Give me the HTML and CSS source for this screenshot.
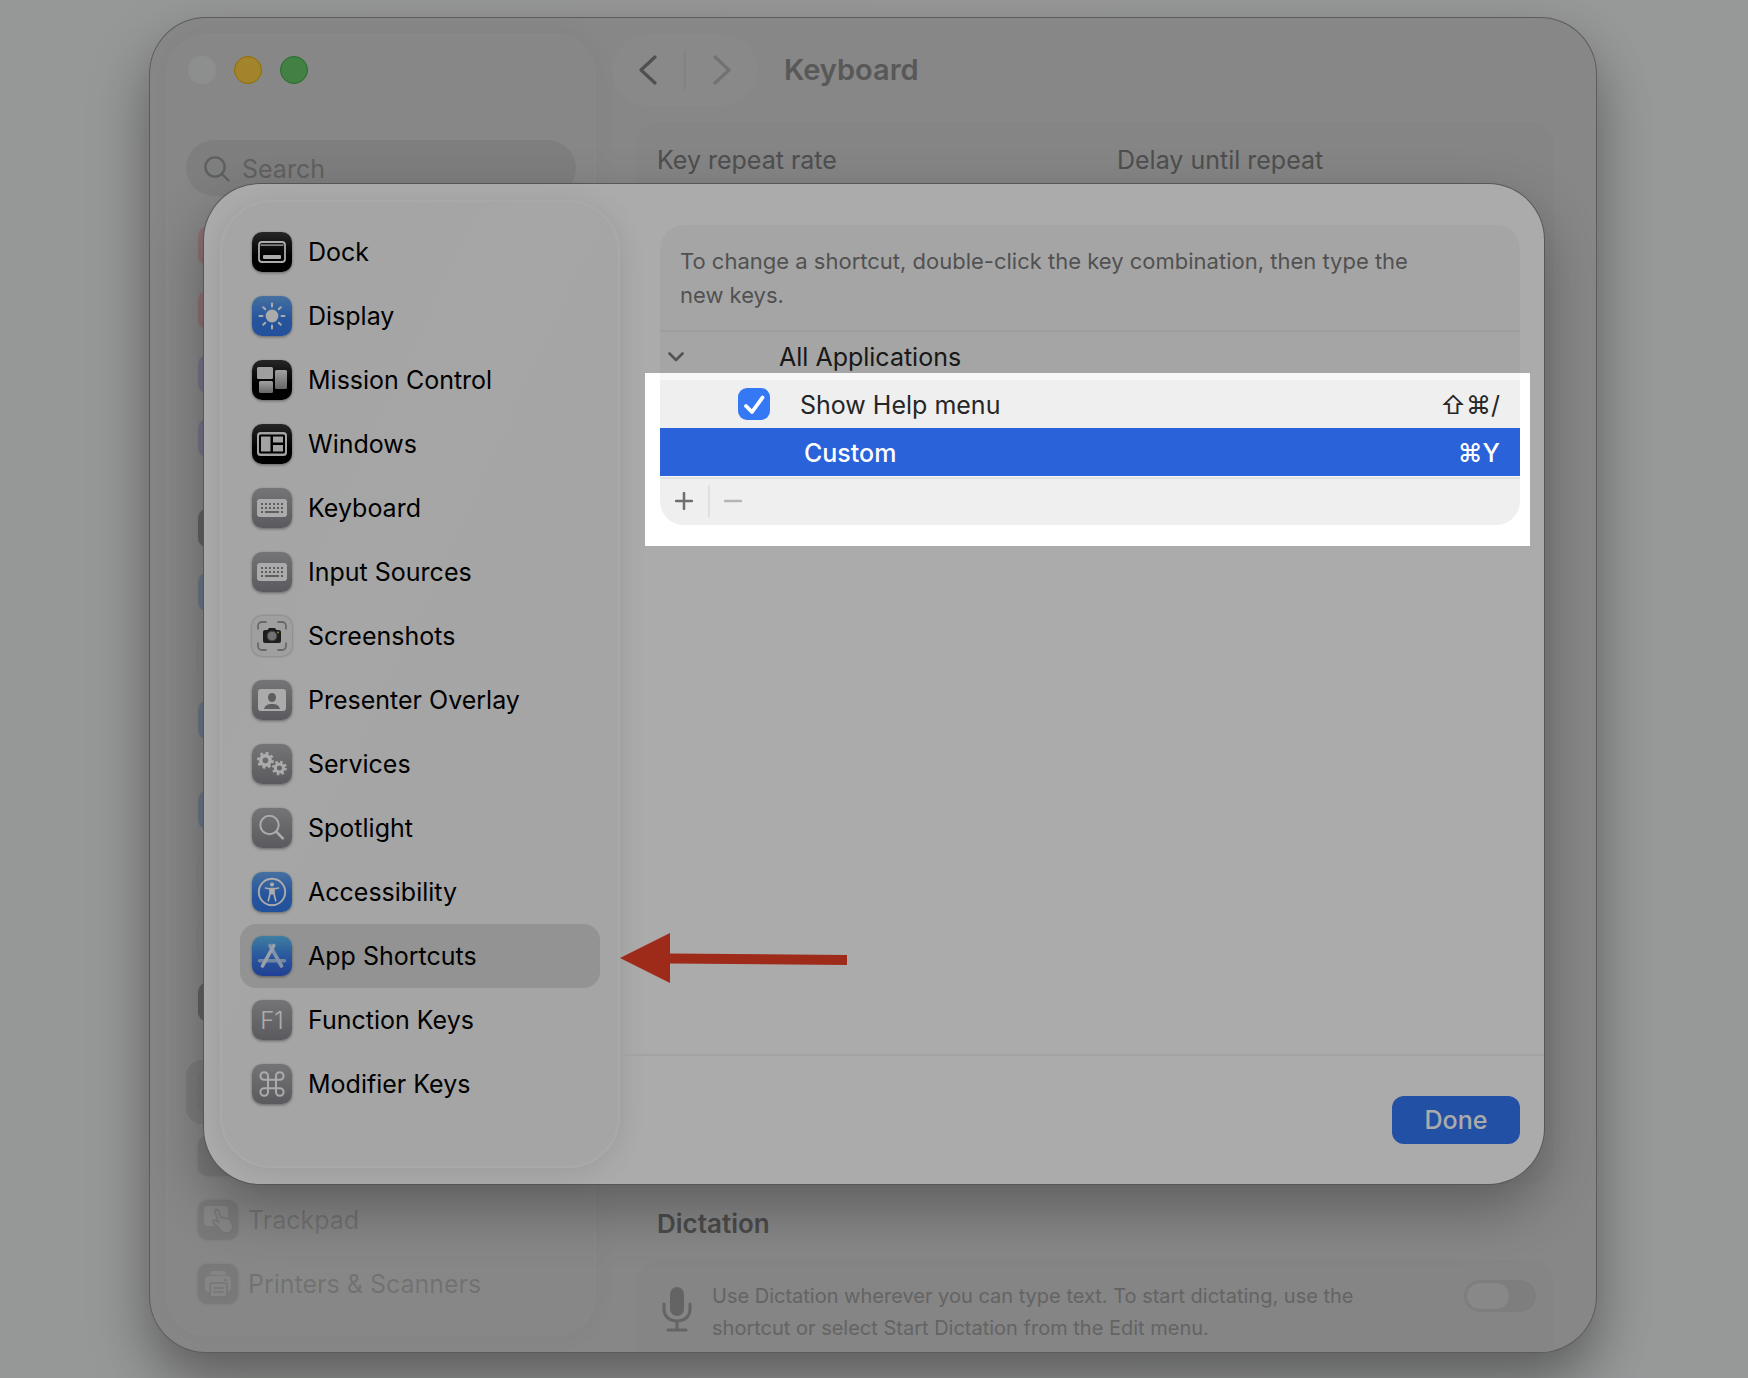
FILE: index.html
```html
<!DOCTYPE html>
<html lang="en">
<head>
<meta charset="utf-8">
<title>Keyboard</title>
<link rel="stylesheet" href="styles.css">
</head>
<body>
<div class="window">
  <aside class="sidebar">
    <div class="lights">
      <span class="light light-off"></span>
      <span class="light light-yellow"></span>
      <span class="light light-green"></span>
    </div>
    <label class="search">
      <svg width="26" height="26" viewBox="0 0 26 26" fill="none" stroke="currentColor" stroke-width="2.4" stroke-linecap="round"><circle cx="11" cy="11" r="9.6"/><path d="M18 18l6.5 6.5"/></svg>
      <input type="text" placeholder="Search">
    </label>
    <ul class="back-list">
      <li><span class="tile tile-pink"></span></li>
      <li><span class="tile tile-pink"></span></li>
      <li><span class="tile tile-purple"></span></li>
      <li><span class="tile tile-purple"></span></li>
    </ul>
    <ul class="back-list">
      <li><span class="tile tile-dark"></span></li>
      <li><span class="tile tile-blue"></span></li>
      <li><span class="tile tile-pale"></span></li>
      <li><span class="tile tile-blue"></span></li>
    </ul>
    <ul class="back-list">
      <li><span class="tile tile-blue"></span></li>
      <li><span class="tile tile-pale"></span></li>
      <li><span class="tile tile-pale"></span></li>
      <li><span class="tile tile-dark"></span></li>
    </ul>
    <ul class="back-list">
      <li class="current"><span class="tile tile-mid"></span></li>
      <li><span class="tile tile-mid"></span></li>
      <li>
        <span class="tile tile-mid"><svg width="40" height="40" viewBox="0 0 40 40"><rect x="6" y="6" width="24" height="20" rx="3" fill="#c8c8c8"/><path d="M17 12c-1-3 2.500-3.500 3.500-1l2.500 7c1-1 2.500-.8 3 0 1-.6 2.500-.4 3 .5 1-.4 2.600.2 3 1.500l2.500 5c1 4-1 8-6 8-4 0-6-2-8-5l-5-5c-1.500-2 .5-3.500 2.500-2.500l2.500 1.500z" fill="#c8c8c8" stroke="#b0b0b0" stroke-width="1.500"/></svg></span>
        <span>Trackpad</span>
      </li>
      <li>
        <span class="tile tile-mid"><svg width="40" height="40" viewBox="0 0 40 40"><rect x="12" y="7" width="16" height="4" rx="2" fill="#c6c6c6"/><rect x="7" y="12" width="26" height="16" rx="4" fill="#c6c6c6"/><circle cx="27.500" cy="16" r="1.300" fill="#b0b0b0"/><rect x="12" y="19" width="17" height="14" rx="2" fill="#c6c6c6" stroke="#b0b0b0" stroke-width="1.500"/><path d="M16 24h9M16 28h9" stroke="#b0b0b0" stroke-width="1.600" stroke-linecap="round"/></svg></span>
        <span>Printers &amp; Scanners</span>
      </li>
    </ul>
  </aside>

  <main class="main">
    <header class="toolbar">
      <div class="nav">
        <button type="button" aria-label="Back"><svg width="18" height="30" viewBox="0 0 18 30"><path d="M16 2L2 15l14 13"/></svg></button>
        <button type="button" aria-label="Forward" class="nav-off"><svg width="18" height="30" viewBox="0 0 18 30"><path d="M2 2l14 13L2 28"/></svg></button>
      </div>
      <h1>Keyboard</h1>
    </header>
    <section class="card repeat">
      <span>Key repeat rate</span>
      <span>Delay until repeat</span>
    </section>
    <h2>Dictation</h2>
    <section class="card dictation">
      <svg class="mic" width="30" height="46" viewBox="0 0 30 46" fill="none" stroke="currentColor" stroke-width="3" stroke-linecap="round"><rect x="8" y="1" width="14" height="29" rx="7" fill="currentColor" stroke="none"/><path d="M2 18v5c0 7 5 12 13 12s13-5 13-12v-5M15 35v9M6 44h18"/></svg>
      <p>Use Dictation wherever you can type text. To start dictating, use the<br>shortcut or select Start Dictation from the Edit menu.</p>
      <input type="checkbox" class="toggle" aria-label="Dictation">
    </section>
  </main>

  <div class="sheet" role="dialog" aria-label="Keyboard shortcuts">
    <nav class="sheet-side">
      <ul>
        <li><a href="#">
          <svg class="icon black" viewBox="0 0 40 40" fill="none"><rect x="7" y="10" width="26" height="20" rx="3" stroke="#fff" stroke-width="1.800"/><path d="M8.500 13.200h23" stroke="#fff" stroke-width="1.300"/><rect x="11" y="23" width="18" height="4" rx="1" fill="#fff"/></svg>Dock</a></li>
        <li><a href="#">
          <svg class="icon blue" viewBox="0 0 40 40"><circle cx="20" cy="20" r="6.400" fill="#fff"/><path d="M20 7.500v3M20 29.500v3M7.500 20h3M29.500 20h3M11.200 11.200l2.100 2.100M26.700 26.700l2.100 2.100M11.200 28.800l2.100-2.100M26.700 13.300l2.100-2.100" stroke="#fff" stroke-width="2" stroke-linecap="round"/></svg>Display</a></li>
        <li><a href="#">
          <svg class="icon black" viewBox="0 0 40 40"><defs><linearGradient id="mc" x1="0" y1="0" x2="0" y2="1"><stop offset="0" stop-color="#f0f0f0"/><stop offset="1" stop-color="#999"/></linearGradient></defs><rect x="5" y="7" width="16" height="12" rx="1.500" fill="#eee"/><rect x="23" y="10" width="12" height="19" rx="1.500" fill="url(#mc)"/><rect x="7" y="21" width="14" height="12" rx="1.500" fill="url(#mc)"/></svg>Mission Control</a></li>
        <li><a href="#">
          <svg class="icon black" viewBox="0 0 40 40"><rect x="5" y="8" width="30" height="24" rx="3.500" fill="#f4f4f4"/><rect x="7" y="10.500" width="26" height="19" rx="1.500" fill="#000"/><path d="M9 12.500h9.500v15H9zM21 12.500h10v6H21zM21 21h10v6.500H21z" fill="#f4f4f4"/></svg>Windows</a></li>
        <li><a href="#">
          <svg class="icon gray" viewBox="0 0 40 40"><rect x="5" y="11" width="30" height="18" rx="3" fill="#fff"/><path d="M9 16h22M9 20h22" stroke="#8c8c91" stroke-width="2" stroke-dasharray="2 2"/><path d="M9 24h2M13 24h14M29 24h2" stroke="#8c8c91" stroke-width="2"/></svg>Keyboard</a></li>
        <li><a href="#">
          <svg class="icon gray" viewBox="0 0 40 40"><rect x="5" y="11" width="30" height="18" rx="3" fill="#fff"/><path d="M9 16h22M9 20h22" stroke="#8c8c91" stroke-width="2" stroke-dasharray="2 2"/><path d="M9 24h2M13 24h14M29 24h2" stroke="#8c8c91" stroke-width="2"/></svg>Input Sources</a></li>
        <li><a href="#">
          <svg class="icon white" viewBox="0 0 40 40" fill="none"><path d="M6 13.500V10a4 4 0 0 1 4-4h4.500M25.500 6H30a4 4 0 0 1 4 4v3.500M34 26.500V30a4 4 0 0 1-4 4h-4.500M14.500 34H10a4 4 0 0 1-4-4v-3.500" stroke="#9c9c9c" stroke-width="1.800"/><path d="M13 14h2.500l1.500-2h6l1.500 2H27a2 2 0 0 1 2 2v9a2 2 0 0 1-2 2H13a2 2 0 0 1-2-2v-9a2 2 0 0 1 2-2z" fill="#2e2e2e"/><circle cx="20" cy="20" r="4.800" fill="#aaa" stroke="#666"/><circle cx="26" cy="16.500" r="1" fill="#e8c23a"/></svg>Screenshots</a></li>
        <li><a href="#">
          <svg class="icon gray" viewBox="0 0 40 40"><rect x="6" y="9" width="28" height="22" rx="3" fill="#fff"/><ellipse cx="20" cy="17.500" rx="4" ry="4.600" fill="#8c8c91"/><path d="M12 29c1-4 4-5 8-5s7 1 8 5z" fill="#8c8c91"/></svg>Presenter Overlay</a></li>
        <li><a href="#">
          <svg class="icon gray" viewBox="0 0 40 40" fill="none" stroke="#fff"><circle cx="13.400" cy="16.300" r="4.700" stroke-width="3.600"/><circle cx="13.400" cy="16.300" r="7.200" stroke-width="2.600" stroke-dasharray="2.830 2.824"/><circle cx="27.400" cy="24" r="4" stroke-width="3"/><circle cx="27.400" cy="24" r="6.200" stroke-width="2.400" stroke-dasharray="2.430 2.440"/></svg>Services</a></li>
        <li><a href="#">
          <svg class="icon gray" viewBox="0 0 40 40" fill="none" stroke="#fff" stroke-width="2" stroke-linecap="round"><circle cx="17.500" cy="17" r="9.200"/><path d="M24.200 23.700l6.600 6.600" stroke-width="2.600"/></svg>Spotlight</a></li>
        <li><a href="#">
          <svg class="icon blue" viewBox="0 0 40 40" fill="none" stroke="#fff"><circle cx="20" cy="20" r="13.200" stroke-width="1.900"/><circle cx="20" cy="12.500" r="2.100" fill="#fff" stroke="none"/><path d="M13.500 16l5 1h3l5-1" stroke-width="1.700" stroke-linecap="round" stroke-linejoin="round"/><path d="M18 16.500h4v5.500l1.700 6.800M18 16.500v5.500l-1.700 6.800" stroke-width="1.700" stroke-linecap="round"/><path d="M18 16.500h4v6h-4z" fill="#fff" stroke="none"/></svg>Accessibility</a></li>
        <li class="selected"><a href="#" aria-current="page">
          <svg class="icon store" viewBox="0 0 40 40" fill="none" stroke-width="3.600" stroke-linecap="round"><path d="M7.500 24.800h25" stroke="#a9c8f4"/><path d="M18 9.500L29.500 30" stroke="#c3daf6"/><path d="M21.800 9.500L10.500 30" stroke="#e6f0fc"/></svg>App Shortcuts</a>
          <svg class="arrow" width="227" height="50" viewBox="0 0 227 50"><path d="M0 25L50 0v20.500l177 1.500v10L50 30.500V50z" fill="#ec3f27"/></svg>
        </li>
        <li><a href="#">
          <svg class="icon gray" viewBox="0 0 40 40"><text x="20" y="29" text-anchor="middle" class="fkey">F1</text></svg>Function Keys</a></li>
        <li><a href="#">
          <svg class="icon gray" viewBox="0 0 40 40" fill="none" stroke="#fff" stroke-width="2"><path d="M24 12v16a3.800 3.800 0 1 0 3.800-3.800H12.200a3.800 3.800 0 1 0 3.800 3.800V12a3.800 3.800 0 1 0-3.800 3.800h15.600a3.800 3.800 0 1 0-3.800-3.800"/></svg>Modifier Keys</a></li>
      </ul>
    </nav>

    <div class="sheet-main">
      <div class="panel">
        <p class="hint">To change a shortcut, double-click the key combination, then type the<br>new keys.</p>
        <table>
          <tbody>
            <tr>
              <td class="lead"><svg width="16" height="10" viewBox="0 0 16 10"><path d="M1.500 1.500L8 8l6.500-6.500" fill="none" stroke="#7d7d7d" stroke-width="2.600" stroke-linecap="round" stroke-linejoin="round"/></svg></td>
              <td class="group">All Applications</td>
              <td></td>
            </tr>
            <tr class="shaded">
              <td class="lead lead-check"><span class="check"><input type="checkbox" id="help" checked><svg width="32" height="32" viewBox="0 0 32 32"><path d="M8 18l6 6L24.500 9.500" fill="none" stroke="#fff" stroke-width="3.800" stroke-linecap="round" stroke-linejoin="round"/></svg></span></td>
              <td class="name"><label for="help">Show Help menu</label></td>
              <td class="keys">⇧⌘/</td>
            </tr>
            <tr class="active">
              <td class="lead"></td>
              <td class="name custom">Custom</td>
              <td class="keys">⌘Y</td>
            </tr>
          </tbody>
        </table>
        <div class="tools">
          <button type="button" aria-label="Add"><svg width="18" height="18" viewBox="0 0 18 18"><path d="M9 1v16M1 9h16" stroke="#6e6e6e" stroke-width="2.500" stroke-linecap="round"/></svg></button>
          <button type="button" aria-label="Remove"><svg width="18" height="18" viewBox="0 0 18 18"><path d="M1 9h16" stroke="#b4b4b4" stroke-width="2.500" stroke-linecap="round"/></svg></button>
        </div>
        <div class="spotlight"></div>
      </div>
      <footer class="sheet-foot"><button type="button" class="done">Done</button></footer>
    </div>
  </div>
</div>
</body>
</html>
```
FILE: styles.css
```css
* { box-sizing: border-box; }

body {
  margin: 0;
  padding: 18px 152px 26px 150px;
  min-height: 100vh;
  overflow: hidden;
  display: flex;
  background: linear-gradient(90deg, #e0e3e1, #e2e3e2 50%, #e2e4e5);
  font-family: Inter, "Liberation Sans", sans-serif;
  font-size: 25px;
  line-height: 32px;
  color: #000;
}

ul { list-style: none; margin: 0; padding: 0; }
h1, h2, p { margin: 0; }
button { border: 0; padding: 0; margin: 0; background: none; font: inherit; color: inherit; }
svg { display: block; flex: none; }

.window {
  position: relative;
  flex: 1;
  display: grid;
  grid-template-columns: 430px 1fr;
  padding-left: 16px;
  border-radius: 56px;
  background: #c9c9c9;
  box-shadow: 0 0 0 1px #8a8a8a, 0 28px 60px rgba(0, 0, 0, .4);
}

/* Window behind the sheet */
.sidebar {
  margin: 16px 0;
  padding: 0 20px;
  border: 2px solid #cbcbcb;
  border-radius: 40px;
  background: #c9c9c9;
  box-shadow: 0 0 30px rgba(0, 0, 0, .03);
  color: rgba(0, 0, 0, .17);
}

.lights { display: flex; gap: 18px; padding: 20px 0 56px; }
.light { width: 28px; height: 28px; border-radius: 50%; }
.light-off { background: #d3d5d6; }
.light-yellow { background: #f0c540; border: 1px solid #dba400; }
.light-green { background: #63bf66; border: 1px solid #36a63d; }

.search {
  display: flex;
  align-items: center;
  gap: 12px;
  height: 56px;
  margin: 0 -2px 18px;
  padding: 2px 18px 0;
  border-radius: 28px;
  background: #bdbdbd;
  color: #8b9092;
}
.search input {
  width: 100%;
  border: 0;
  padding: 0;
  background: none;
  outline: 0;
  font: inherit;
}
.search input::placeholder { color: #909090; opacity: 1; }

.back-list { margin: 0 -2px 26px; }
.back-list:last-child { margin-bottom: 0; }
.back-list li {
  display: flex;
  align-items: center;
  gap: 10px;
  height: 64px;
  padding: 0 12px;
  border-radius: 16px;
}
.back-list .current { background: #b9b9b9; }
.tile { width: 40px; height: 40px; border-radius: 10px; }
.tile-pink { background: #d3a8a8; }
.tile-purple { background: #b2abcc; }
.tile-dark { background: #929292; }
.tile-blue { background: #9fb1c9; }
.tile-pale { background: #c9c9c9; box-shadow: 0 0 2px #b4b4b4; }
.tile-mid { background: #b5b5b5; box-shadow: 0 0 3px #b0b0b0; }

.main {
  display: flex;
  flex-direction: column;
  padding: 16px 42px 0 40px;
  border-radius: 0 56px 56px 0;
  overflow: hidden;
}
.toolbar { display: flex; align-items: center; gap: 26px; margin-left: -24px; }
.nav {
  display: flex;
  width: 146px;
  height: 72px;
  padding: 16px 0;
  border-radius: 36px;
  background: #cccccc;
}
.nav button { flex: 1; display: grid; place-items: center; color: #777; }
.nav button + button { border-left: 2px solid #c2c2c2; }
.nav .nav-off { color: #ababab; }
.nav path { fill: none; stroke: currentColor; stroke-width: 3.2; stroke-linecap: round; stroke-linejoin: round; }
h1 { font-size: 29px; font-weight: 600; color: #838383; }
h2 { padding: 0 21px; margin: 24px 0 20px; font-size: 26px; font-weight: 600; color: #707070; }

.card { padding: 22px 21px; border-radius: 24px; background: #c6c6c6; }
.repeat {
  flex: 1;
  display: grid;
  grid-template-columns: 1fr 1fr;
  gap: 44px;
  margin-top: 16px;
  color: #757575;
}
.dictation {
  display: flex;
  gap: 20px;
  padding: 20px 18px 8px 26px;
  border-radius: 24px 24px 0 0;
  color: #959595;
  font-size: 20px;
}
.dictation p { flex: 1; }
.mic { margin-top: 6px; }
.toggle {
  appearance: none;
  display: flex;
  width: 72px;
  height: 32px;
  margin: 0;
  padding: 3px;
  border-radius: 16px;
  background: #bcbcbc;
}
.toggle::before { content: ""; width: 42px; border-radius: 13px; background: #cbcbcb; }

/* Sheet */
.sheet {
  position: absolute;
  inset: 166px 52px 168px 54px;
  display: flex;
  padding: 16px 0 16px 16px;
  border-radius: 56px;
  background: #fff;
  box-shadow: 0 0 0 1px #828282, 0 24px 56px rgba(0, 0, 0, .3);
}
.sheet-side {
  width: 400px;
  padding: 18px;
  border: 2px solid #fcfcfc;
  border-radius: 52px;
  background: linear-gradient(115deg, #f7f7f7 20%, #f6f8f7 42%, #f6f6f8 58%, #f7f7f7 80%);
  box-shadow: 0 4px 28px rgba(0, 0, 0, .1);
}
.sheet-side li { position: relative; border-radius: 16px; }
.sheet-side a {
  display: flex;
  align-items: center;
  gap: 16px;
  height: 64px;
  padding: 0 12px;
  color: #000;
  text-decoration: none;
}
.sheet-side .selected { background: #dcdcdc; }
.icon { width: 40px; height: 40px; border-radius: 10px; box-shadow: 0 1px 3px rgba(0, 0, 0, .4); }
.black { background: linear-gradient(#3a3a3a, #000 60%); }
.blue { background: linear-gradient(#68a8ef, #3a80ea 55%, #3478e6); }
.gray { background: linear-gradient(#aeaeb2, #87878d); }
.white { background: #eee; box-shadow: 0 0 3px rgba(0, 0, 0, .35); }
.store { background: linear-gradient(#5cbdf0, #3f82ea 50%, #3260dc); }
.fkey { font-size: 24px; font-weight: 300; fill: #fff; }
.arrow { position: absolute; left: calc(100% + 20px); top: 9px; }

.sheet-main { flex: 1; display: flex; flex-direction: column; }
.panel {
  position: relative;
  margin: 25px 24px 0 40px;
  border-radius: 24px;
  background: #f7f7f7;
}
.hint {
  padding: 19px 20px 18px;
  border-bottom: 2px solid #ebebeb;
  font-size: 22px;
  line-height: 34px;
  color: #7a7a7a;
}
table { width: 100%; border-collapse: collapse; color: #262626; }
td { height: 48px; padding: 2px 0 0; }
.lead { width: 119px; padding-left: 8px; }
.lead-check { padding: 0 0 0 78px; }
.name { padding-left: 21px; }
.custom { padding-left: 25px; }
.keys { padding-right: 20px; text-align: right; }
.shaded { background: #efefef; }
.active { background: #2962d9; color: #fff; font-weight: 500; }
.check { display: grid; width: 32px; }
.check input {
  grid-area: 1 / 1;
  appearance: none;
  width: 32px;
  height: 32px;
  margin: 0;
  border-radius: 9px;
  background: #3478f6;
}
.check svg { grid-area: 1 / 1; pointer-events: none; }
.tools {
  display: flex;
  height: 48px;
  margin-top: 1px;
  padding: 6px 0 8px;
  border-top: 2px solid #e2e2e2;
  border-radius: 0 0 24px 24px;
  background: #efefef;
}
.tools button { width: 48px; display: grid; place-items: center; }
.tools button + button { border-left: 2px solid #dfdfdf; }

/* Everything outside this frame is dimmed */
.spotlight {
  position: absolute;
  z-index: 10;
  inset: 148px -10px -21px -15px;
  box-shadow: 0 0 0 9999px rgba(0, 0, 0, .33);
  pointer-events: none;
}

.sheet-foot {
  display: flex;
  justify-content: flex-end;
  margin: auto 0 0;
  padding: 40px 24px 24px;
  border-top: 2px solid #f2f2f2;
}
.done {
  width: 128px;
  height: 48px;
  border-radius: 12px;
  background: #3478f6;
  color: #fff;
  font-weight: 500;
}
```
